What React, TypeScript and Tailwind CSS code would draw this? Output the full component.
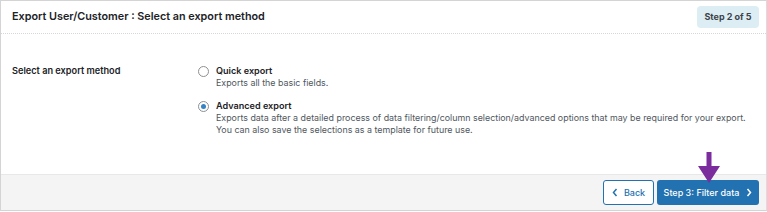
import React from "react";

export default function App() {
  return (
    <div className="w-[767px] h-[212px] bg-white" style={{ fontFamily: "Inter, 'Noto Sans', sans-serif" }}>
      <div className="h-[211px] border border-[#d4d4d4] border-r-[#dcdcdc] flex flex-col bg-white">
        <div className="h-[33px] flex items-center justify-between pl-[11px] pr-[7px] border-b border-dotted border-[#d6d6d6]">
          <div className="text-[10.8px] font-semibold text-[#1d2327]">Export User/Customer : Select an export method</div>
          <div className="h-[22px] w-[62px] rounded-[4px] bg-[#dcedf4] flex items-center justify-center text-[9px] font-bold text-[#3c434a]">Step 2 of 5</div>
        </div>
        <div className="flex-1 flex pl-[11px] pt-[30px]">
          <div className="w-[186px] shrink-0 text-[9.2px] font-semibold text-[#1d2327] leading-[13px]">Select an export method</div>
          <div className="flex flex-col gap-[10px]">
            <div className="flex gap-[7px]">
              <span className="mt-[1.5px] w-[11px] h-[11px] rounded-full border border-[#8c8f94] bg-white shrink-0"></span>
              <div>
                <div className="text-[9.1px] font-semibold text-[#1d2327] leading-[13px]">Quick export</div>
                <div className="text-[8.9px] text-[#50575e] leading-[12px]">Exports all the basic fields.</div>
              </div>
            </div>
            <div className="flex gap-[7px]">
              <span className="mt-[1.5px] w-[11px] h-[11px] rounded-full border border-[#8c8f94] bg-white shrink-0 flex items-center justify-center">
                <span className="w-[5px] h-[5px] rounded-full bg-[#3582c4]"></span>
              </span>
              <div>
                <div className="text-[9.1px] font-semibold text-[#1d2327] leading-[13px]">Advanced export</div>
                <div className="text-[8.9px] text-[#50575e] leading-[12px]">Exports data after a detailed process of data filtering/column selection/advanced options that may be required for your export.</div>
                <div className="text-[8.9px] text-[#50575e] leading-[12px]">You can also save the selections as a template for future use.</div>
              </div>
            </div>
          </div>
        </div>
        <div className="h-[36px] bg-[#f4f4f4] border-t border-[#e8e8e8] flex items-center justify-end pr-[7px] gap-[3px] relative">
          <button className="h-[25px] w-[51px] rounded-[3px] border border-[#2271b1] bg-white text-[#2271b1] text-[9px] font-medium flex items-center justify-center gap-[6px]">
            <svg width="6" height="9" viewBox="0 0 6 9"><path d="M4.5 1 L1.5 4.5 L4.5 8" fill="none" stroke="#2271b1" strokeWidth="1.5" /></svg>
            Back
          </button>
          <button className="h-[25px] w-[102px] rounded-[3px] bg-[#2271b1] text-white text-[9px] font-medium flex items-center justify-center gap-[7px]">
            Step 3: Filter data
            <svg width="6" height="9" viewBox="0 0 6 9"><path d="M1.5 1 L4.5 4.5 L1.5 8" fill="none" stroke="#ffffff" strokeWidth="1.5" /></svg>
          </button>
          <svg className="absolute left-[696px] top-[-23px]" width="24" height="32" viewBox="0 0 24 32">
            <path d="M9.5 0 H14.5 V14 H23 L12 31 L1 14 H9.5 Z" fill="#7b2d9e" />
          </svg>
        </div>
      </div>
    </div>
  );
}
